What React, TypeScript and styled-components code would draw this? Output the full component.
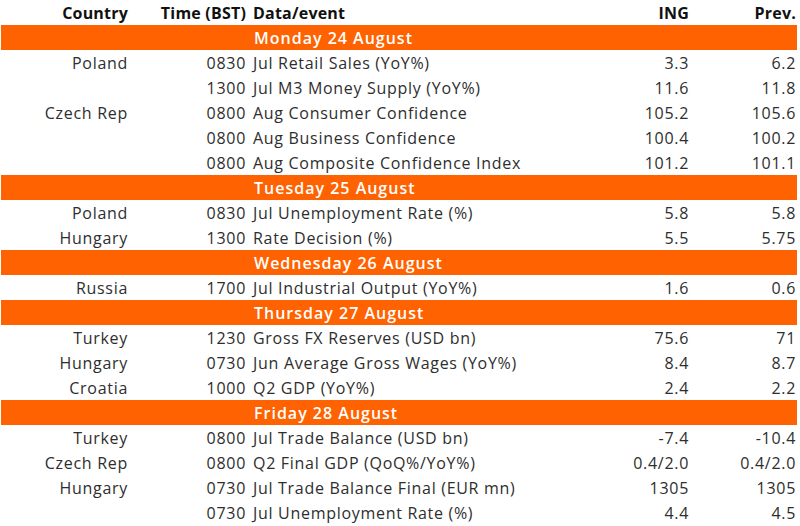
import React from "react";
import styled, { createGlobalStyle } from "styled-components";

const Global = createGlobalStyle`
  html, body { margin: 0; padding: 0; background: #ffffff; }
  body { font-family: "Open Sans", "Noto Sans", sans-serif; }
`;

const Table = styled.div`
  width: 800px;
  display: flex;
  flex-direction: column;
`;

const Row = styled.div<{ $band?: boolean; $head?: boolean }>`
  display: grid;
  grid-template-columns: 131px 118px 1fr 92px 108px;
  height: 25px;
  box-sizing: border-box;
  padding-top: 1px;
  align-items: center;
  font-size: 16px;
  line-height: 24px;
  letter-spacing: ${(p) => (p.$head ? "0.2px" : p.$band ? "1px" : "0.7px")};
  color: ${(p) => (p.$band ? "#ffffff" : p.$head ? "#111111" : "#2e2e2e")};
  font-weight: ${(p) => (p.$head ? 700 : p.$band ? 600 : 400)};
  background: ${(p) => (p.$band ? "#ff6200" : "transparent")};
  margin: ${(p) => (p.$band ? "0 3px 0 1px" : "0")};
  white-space: nowrap;
`;

const Cell = styled.div<{ $align?: "left" | "right"; $span?: number }>`
  text-align: ${(p) => p.$align ?? "right"};
  padding: ${(p) => (p.$align === "left" ? "0 0 0 4px" : "0 3px 0 0")};
  grid-column: ${(p) => (p.$span ? `span ${p.$span}` : "auto")};
  overflow: visible;
`;

const LastCell = styled(Cell)`
  padding-right: 4px;
`;

type Item = [string, string, string, string, string];
type Day = { title: string; items: Item[] };

const days: Day[] = [
  {
    title: "Monday 24 August",
    items: [
      ["Poland", "0830", "Jul Retail Sales (YoY%)", "3.3", "6.2"],
      ["", "1300", "Jul M3 Money Supply (YoY%)", "11.6", "11.8"],
      ["Czech Rep", "0800", "Aug Consumer Confidence", "105.2", "105.6"],
      ["", "0800", "Aug Business Confidence", "100.4", "100.2"],
      ["", "0800", "Aug Composite Confidence Index", "101.2", "101.1"],
    ],
  },
  {
    title: "Tuesday 25 August",
    items: [
      ["Poland", "0830", "Jul Unemployment Rate (%)", "5.8", "5.8"],
      ["Hungary", "1300", "Rate Decision (%)", "5.5", "5.75"],
    ],
  },
  {
    title: "Wednesday 26 August",
    items: [["Russia", "1700", "Jul Industrial Output (YoY%)", "1.6", "0.6"]],
  },
  {
    title: "Thursday 27 August",
    items: [
      ["Turkey", "1230", "Gross FX Reserves (USD bn)", "75.6", "71"],
      ["Hungary", "0730", "Jun Average Gross Wages (YoY%)", "8.4", "8.7"],
      ["Croatia", "1000", "Q2 GDP (YoY%)", "2.4", "2.2"],
    ],
  },
  {
    title: "Friday 28 August",
    items: [
      ["Turkey", "0800", "Jul Trade Balance (USD bn)", "-7.4", "-10.4"],
      ["Czech Rep", "0800", "Q2 Final GDP (QoQ%/YoY%)", "0.4/2.0", "0.4/2.0"],
      ["Hungary", "0730", "Jul Trade Balance Final (EUR mn)", "1305", "1305"],
      ["", "0730", "Jul Unemployment Rate (%)", "4.4", "4.5"],
    ],
  },
];

export default function App() {
  return (
    <>
      <Global />
      <Table>
        <Row $head>
          <Cell>Country</Cell>
          <Cell>Time (BST)</Cell>
          <Cell $align="left">Data/event</Cell>
          <Cell>ING</Cell>
          <LastCell>Prev.</LastCell>
        </Row>
        {days.map((d) => (
          <React.Fragment key={d.title}>
            <Row $band>
              <Cell />
              <Cell />
              <Cell $align="left" $span={3}>
                {d.title}
              </Cell>
            </Row>
            {d.items.map((it, i) => (
              <Row key={d.title + i}>
                <Cell>{it[0]}</Cell>
                <Cell>{it[1]}</Cell>
                <Cell $align="left">{it[2]}</Cell>
                <Cell>{it[3]}</Cell>
                <LastCell>{it[4]}</LastCell>
              </Row>
            ))}
          </React.Fragment>
        ))}
      </Table>
    </>
  );
}
